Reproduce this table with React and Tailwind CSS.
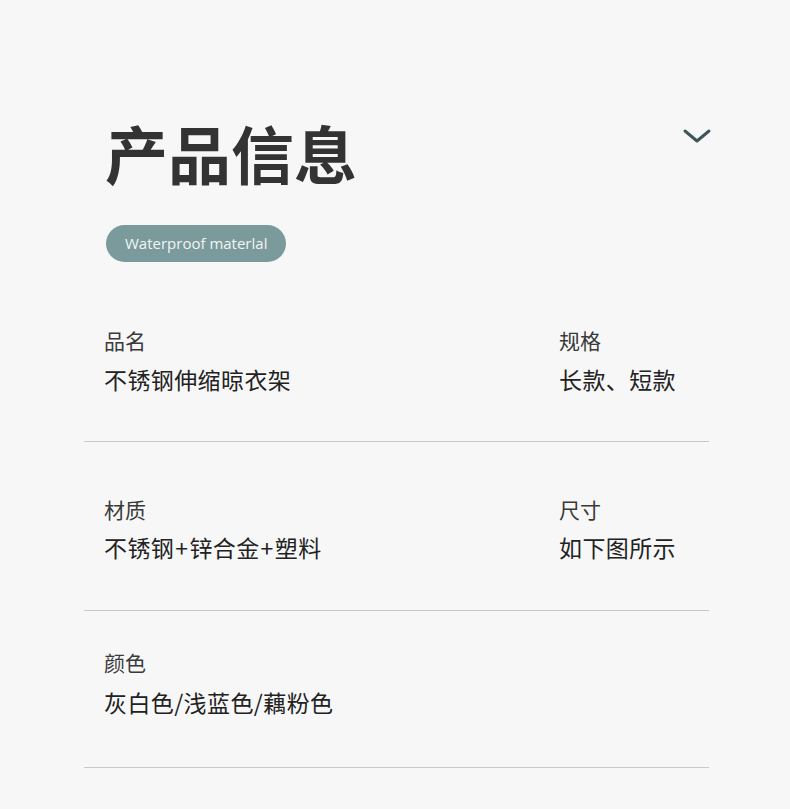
import React from "react";

const cjk = { fontFamily: '"Noto Sans CJK SC", "Noto Sans", sans-serif' };

function Value({ text }) {
  const parts = text.split(/(\+)/);
  return (
    <>
      {parts.map((p, i) =>
        p === "+" ? (
          <span key={i} className="mx-[1px]">{p}</span>
        ) : (
          <span key={i}>{p}</span>
        )
      )}
    </>
  );
}

function Row({ items, pt, gap, pb }) {
  return (
    <div className={`border-b border-[#c9c9c9] pl-[20px] grid grid-cols-[455px_1fr] ${pt} ${pb}`}>
      {items.map((it, i) => (
        <div key={i} className="flex flex-col">
          <div className="text-[21px] leading-[21px] text-[#3a3a3a]">{it[0]}</div>
          <div className={`text-[23px] leading-[23px] tracking-[0.4px] text-[#222] ${gap}`}>
            <Value text={it[1]} />
          </div>
        </div>
      ))}
    </div>
  );
}

export default function App() {
  return (
    <div className="w-[790px] h-[809px] bg-[#f7f7f7] overflow-hidden" style={cjk}>
      <div className="ml-[84px] w-[625px]">
        <div className="pl-[21px] pt-[120px] flex justify-between items-start">
          <div className="text-[63px] leading-[63px] font-bold text-[#333]">产品信息</div>
          <svg width="30" height="18" viewBox="0 0 30 18" className="mt-[7px] mr-[-3px]" fill="none">
            <path d="M3 4 L15 14 L27 4" stroke="#3f5658" strokeWidth="3" strokeLinecap="round" strokeLinejoin="round" />
          </svg>
        </div>
        <div className="pl-[22px] mt-[42px]">
          <div
            className="inline-flex items-center h-[37px] px-[19px] rounded-full bg-[#7b9a9c] text-[#f2f5f5] text-[15px]"
            style={{ fontFamily: '"Open Sans", "Noto Sans", sans-serif' }}
          >
            Waterproof materlal
          </div>
        </div>
        <div className="mt-[68px]">
          <Row items={[["品名", "不锈钢伸缩晾衣架"], ["规格", "长款、短款"]]} pt="pt-0" gap="mt-[17px]" pb="pb-[50px]" />
          <Row items={[["材质", "不锈钢+锌合金+塑料"], ["尺寸", "如下图所示"]]} pt="pt-[57px]" gap="mt-[16px]" pb="pb-[51px]" />
          <Row items={[["颜色", "灰白色/浅蓝色/藕粉色"]]} pt="pt-[41px]" gap="mt-[18px]" pb="pb-[53px]" />
        </div>
      </div>
    </div>
  );
}
